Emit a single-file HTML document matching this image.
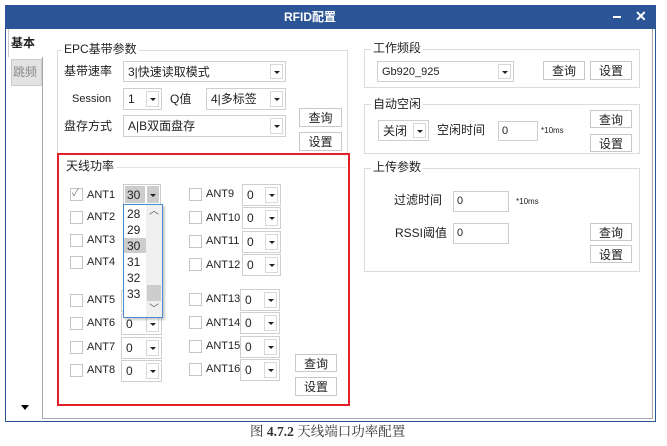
<!DOCTYPE html>
<html><head><meta charset="utf-8"><style>
*{box-sizing:border-box;margin:0;padding:0}
body{width:667px;height:446px;background:#fff;position:relative;overflow:hidden;font-family:"Liberation Sans","Noto Sans CJK SC",sans-serif;font-size:12px;color:#222}
.a{position:absolute;white-space:nowrap}
.t{position:absolute;line-height:14px;white-space:nowrap}
.grp{position:absolute;border:1px solid #dcdcdc}
.gt{position:absolute;background:#fff;padding:0 2px;line-height:14px;font-size:12px}
.cb{position:absolute;border:1px solid #cfcfcf;background:#fff}
.cb .ar{position:absolute;right:2px;top:2px;bottom:2px;width:13px;border:1px solid #d8d8d8;background:#fff}
.cb .ar:after{content:"";position:absolute;left:3px;top:50%;margin-top:-1px;border-left:3px solid transparent;border-right:3px solid transparent;border-top:3px solid #222}
.cb span{position:absolute;left:4px;top:50%;transform:translateY(-50%);line-height:14px}
.btn{position:absolute;border:1px solid #c8c8c8;background:#fff;text-align:center;font-size:12px}
.inp{position:absolute;border:1px solid #cfcfcf;background:#fff;padding-left:3px;font-size:11px}
.chk{position:absolute;width:13px;height:13px;border:1px solid #c4c4c4;background:#fff}
.sm{font-size:11px}
</style></head><body>
<div class="a" style="left:5px;top:5px;width:651px;height:417px;border:1px solid #2b5597;border-top:none"></div>
<div class="a" style="left:5px;top:5px;width:651px;height:24px;background:#2b5597"></div>
<div class="t" style="left:284px;top:10px;color:#fff;font-weight:bold;font-size:12px">RFID配置</div>
<div class="a" style="left:613px;top:16px;width:8px;height:2px;background:#fff"></div>
<div class="t" style="left:635px;top:9px;color:#fff;font-weight:bold;font-size:14px">✕</div>
<div class="a" style="left:42px;top:29px;width:611px;height:390px;border:1px solid #a8a8a8;border-top:none"></div>
<div class="a" style="left:8px;top:29px;width:35px;height:28px;background:#fff;border-left:1px solid #ccc;border-right:1px solid #fff"></div>
<div class="t" style="left:11px;top:36px;font-weight:bold">基本</div>
<div class="a" style="left:11px;top:59px;width:31px;height:27px;background:#e3e3e3;border:1px solid #ccc"></div>
<div class="t" style="left:13px;top:65px;color:#888">跳频</div>
<div class="a" style="left:21px;top:405px;border-left:4px solid transparent;border-right:4px solid transparent;border-top:5px solid #000"></div>
<div class="grp" style="left:57px;top:50px;width:291px;height:104px"></div>
<div class="gt" style="left:62px;top:42px">EPC基带参数</div>
<div class="t" style="left:64px;top:64px">基带速率</div>
<div class="cb" style="left:123px;top:61px;width:163px;height:21px"><span>3|快速读取模式</span><div class="ar"></div></div>
<div class="t sm" style="left:72px;top:92px">Session</div>
<div class="cb" style="left:123px;top:88px;width:39px;height:22px"><span>1</span><div class="ar"></div></div>
<div class="t" style="left:170px;top:92px">Q值</div>
<div class="cb" style="left:206px;top:88px;width:80px;height:22px"><span>4|多标签</span><div class="ar"></div></div>
<div class="t" style="left:64px;top:119px">盘存方式</div>
<div class="cb" style="left:123px;top:115px;width:163px;height:22px"><span>A|B双面盘存</span><div class="ar"></div></div>
<div class="btn" style="left:299px;top:108px;width:43px;height:19px">查询</div>
<div class="btn" style="left:299px;top:132px;width:43px;height:19px">设置</div>
<div class="a" style="left:57px;top:153px;width:293px;height:253px;border:2px solid #e3202a"></div>
<div class="a" style="left:64px;top:167px;width:282px;height:1px;background:#e2e2e2"></div>
<div class="gt" style="left:64px;top:159px">天线功率</div>
<div class="chk" style="left:70px;top:188px"></div><div class="t" style="left:72px;top:187px;color:#777;font-size:10px">✓</div>
<div class="t sm" style="left:87px;top:188px">ANT1</div>
<div class="a" style="left:123px;top:184px;width:38px;height:21px;border:1px solid #ccc"></div>
<div class="a" style="left:125px;top:186px;width:20px;height:17px;background:#ccc"></div>
<div class="t" style="left:127px;top:188px">30</div>
<div class="a" style="left:147px;top:186px;width:12px;height:17px;background:#ccc"></div>
<div class="a" style="left:150px;top:194px;border-left:3px solid transparent;border-right:3px solid transparent;border-top:3px solid #222"></div>
<div class="chk" style="left:70px;top:211px"></div><div class="t sm" style="left:87px;top:210px">ANT2</div>
<div class="chk" style="left:70px;top:234px"></div><div class="t sm" style="left:87px;top:233px">ANT3</div>
<div class="chk" style="left:70px;top:256px"></div><div class="t sm" style="left:87px;top:255px">ANT4</div>
<div class="chk" style="left:70px;top:294px"></div><div class="t sm" style="left:87px;top:293px">ANT5</div>
<div class="cb" style="left:121px;top:290px;width:41px;height:22px"><span>0</span><div class="ar"></div></div>
<div class="chk" style="left:70px;top:317px"></div><div class="t sm" style="left:87px;top:316px">ANT6</div>
<div class="cb" style="left:121px;top:313px;width:41px;height:22px"><span>0</span><div class="ar"></div></div>
<div class="chk" style="left:70px;top:341px"></div><div class="t sm" style="left:87px;top:340px">ANT7</div>
<div class="cb" style="left:121px;top:337px;width:41px;height:22px"><span>0</span><div class="ar"></div></div>
<div class="chk" style="left:70px;top:364px"></div><div class="t sm" style="left:87px;top:363px">ANT8</div>
<div class="cb" style="left:121px;top:360px;width:41px;height:22px"><span>0</span><div class="ar"></div></div>
<div class="a" style="left:123px;top:204px;width:40px;height:114px;border:1px solid #4a8ad0;background:#fff;box-shadow:2px 2px 2px rgba(0,0,0,.2)"></div>
<div class="a" style="left:146px;top:205px;width:16px;height:112px;background:#f0f0f0"></div>
<div class="a" style="left:147px;top:285px;width:14px;height:16px;background:#cdcdcd"></div>
<div class="t" style="left:149px;top:205px;font-size:10px;color:#555">︿</div>
<div class="t" style="left:149px;top:303px;font-size:10px;color:#555">﹀</div>
<div class="a" style="left:124px;top:238px;width:22px;height:15px;background:#cdcdcd"></div>
<div class="t" style="left:127px;top:207px">28</div>
<div class="t" style="left:127px;top:223px">29</div>
<div class="t" style="left:127px;top:239px">30</div>
<div class="t" style="left:127px;top:255px">31</div>
<div class="t" style="left:127px;top:271px">32</div>
<div class="t" style="left:127px;top:287px">33</div>
<div class="chk" style="left:189px;top:188px"></div><div class="t sm" style="left:206px;top:187px">ANT9</div>
<div class="cb" style="left:242px;top:184px;width:39px;height:22px"><span>0</span><div class="ar"></div></div>
<div class="chk" style="left:189px;top:211px"></div><div class="t sm" style="left:206px;top:211px">ANT10</div>
<div class="cb" style="left:242px;top:207px;width:39px;height:22px"><span>0</span><div class="ar"></div></div>
<div class="chk" style="left:189px;top:235px"></div><div class="t sm" style="left:206px;top:234px">ANT11</div>
<div class="cb" style="left:242px;top:231px;width:39px;height:22px"><span>0</span><div class="ar"></div></div>
<div class="chk" style="left:189px;top:258px"></div><div class="t sm" style="left:206px;top:258px">ANT12</div>
<div class="cb" style="left:242px;top:254px;width:39px;height:22px"><span>0</span><div class="ar"></div></div>
<div class="chk" style="left:189px;top:293px"></div><div class="t sm" style="left:206px;top:292px">ANT13</div>
<div class="cb" style="left:240px;top:289px;width:40px;height:22px"><span>0</span><div class="ar"></div></div>
<div class="chk" style="left:189px;top:316px"></div><div class="t sm" style="left:206px;top:316px">ANT14</div>
<div class="cb" style="left:240px;top:312px;width:40px;height:22px"><span>0</span><div class="ar"></div></div>
<div class="chk" style="left:189px;top:340px"></div><div class="t sm" style="left:206px;top:339px">ANT15</div>
<div class="cb" style="left:240px;top:336px;width:40px;height:22px"><span>0</span><div class="ar"></div></div>
<div class="chk" style="left:189px;top:363px"></div><div class="t sm" style="left:206px;top:362px">ANT16</div>
<div class="cb" style="left:240px;top:359px;width:40px;height:22px"><span>0</span><div class="ar"></div></div>
<div class="btn" style="left:295px;top:354px;width:42px;height:18px">查询</div>
<div class="btn" style="left:295px;top:377px;width:42px;height:19px">设置</div>
<div class="grp" style="left:364px;top:49px;width:276px;height:39px"></div>
<div class="gt" style="left:371px;top:41px">工作频段</div>
<div class="cb" style="left:377px;top:61px;width:137px;height:21px"><span style="font-size:11px">Gb920_925</span><div class="ar"></div></div>
<div class="btn" style="left:543px;top:61px;width:42px;height:19px">查询</div>
<div class="btn" style="left:590px;top:61px;width:42px;height:19px">设置</div>
<div class="grp" style="left:364px;top:104px;width:276px;height:50px"></div>
<div class="gt" style="left:371px;top:97px">自动空闲</div>
<div class="cb" style="left:378px;top:120px;width:51px;height:21px"><span>关闭</span><div class="ar"></div></div>
<div class="t" style="left:437px;top:123px">空闲时间</div>
<div class="inp" style="left:498px;top:121px;width:40px;height:20px;line-height:18px">0</div>
<div class="t" style="left:541px;top:124px;font-size:8px">*10ms</div>
<div class="btn" style="left:590px;top:110px;width:42px;height:18px">查询</div>
<div class="btn" style="left:590px;top:134px;width:42px;height:18px">设置</div>
<div class="grp" style="left:364px;top:168px;width:276px;height:104px"></div>
<div class="gt" style="left:371px;top:160px">上传参数</div>
<div class="t" style="left:394px;top:193px">过滤时间</div>
<div class="inp" style="left:453px;top:191px;width:56px;height:21px;line-height:19px">0</div>
<div class="t" style="left:516px;top:195px;font-size:8px">*10ms</div>
<div class="t" style="left:395px;top:226px">RSSI阈值</div>
<div class="inp" style="left:453px;top:223px;width:56px;height:21px;line-height:19px">0</div>
<div class="btn" style="left:590px;top:223px;width:42px;height:18px">查询</div>
<div class="btn" style="left:590px;top:245px;width:42px;height:18px">设置</div>
<div class="t" style="left:250px;top:425px;font-family:'Liberation Serif','Noto Serif CJK SC',serif;font-size:13.5px;color:#333">图 <b>4.7.2</b> 天线端口功率配置</div>
</body></html>
